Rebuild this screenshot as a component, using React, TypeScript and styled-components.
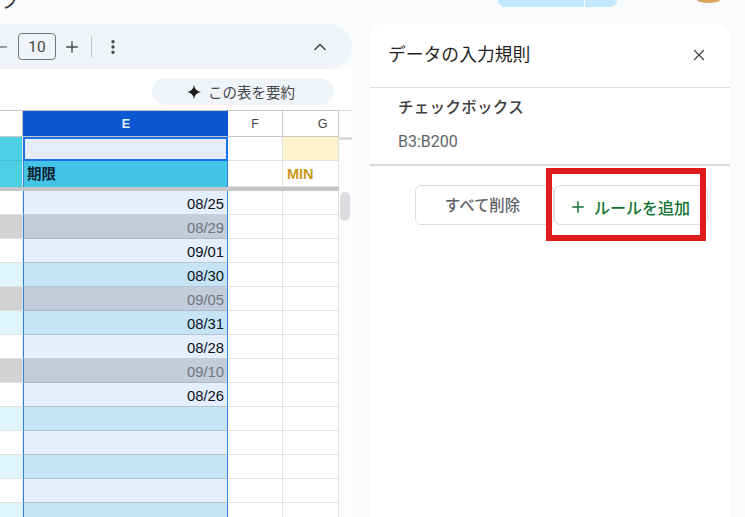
import React from "react";
import styled, { createGlobalStyle } from "styled-components";
import { ChevronUp, EllipsisVertical, Minus, Plus, X } from "lucide-react";

const FONT = `Roboto, "Noto Sans CJK JP", sans-serif`;
const ARIAL = `"Liberation Sans", "Noto Sans CJK JP", sans-serif`;

const GlobalStyle = createGlobalStyle`
  html, body {
    margin: 0;
    padding: 0;
    background: #f9fbfd;
    overflow: hidden;
  }
  * { box-sizing: border-box; }
`;

const Page = styled.div`
  position: relative;
  width: 745px;
  height: 517px;
  overflow: hidden;
  display: grid;
  grid-template-columns: 352px 360px;
  column-gap: 18px;
  grid-template-rows: 24px 1fr;
  font-family: ${FONT};
  background: #f9fbfd;
`;

const TopLeft = styled.div`
  overflow: hidden;
  height: 24px;
`;

const MenuGlyph = styled.div`
  margin-top: -11px;
  font-size: 20px;
  line-height: 24px;
  color: #3c4043;
`;

const TopRight = styled.div`
  display: flex;
  align-items: flex-start;
  padding-left: 128px;
`;

const SharePill = styled.div`
  width: 119px;
  height: 7px;
  background: #c2e7ff;
  border-radius: 0 0 16px 16px;
  display: flex;
  justify-content: flex-end;
`;

const ShareSplit = styled.div`
  width: 33px;
  height: 100%;
  border-left: 1px solid #f9fbfd;
`;

const Avatar = styled.div`
  width: 23px;
  height: 3px;
  margin-left: 80px;
  background: #d9a760;
  border-radius: 0 0 50% 50% / 0 0 100% 100%;
`;

const SheetColumn = styled.div`
  display: flex;
  flex-direction: column;
  min-height: 0;
`;

const Toolbar = styled.div`
  height: 45px;
  flex-shrink: 0;
  background: #f0f4f9;
  border-radius: 0 23px 23px 0;
  display: flex;
  align-items: center;
  color: #444746;
`;

const MinusClip = styled.div`
  width: 7px;
  overflow: hidden;
  display: flex;
  justify-content: flex-end;
  margin-right: 11px;

  svg {
    flex-shrink: 0;
    margin-right: -3px;
  }
`;

const SizeBox = styled.div`
  width: 38px;
  height: 27px;
  border: 1px solid #747775;
  border-radius: 4px;
  font-size: 15.5px;
  display: flex;
  align-items: center;
  justify-content: center;
`;

const ToolIcon = styled.div<{ $left: number }>`
  display: flex;
  margin-left: ${(p) => p.$left}px;
`;

const ToolDivider = styled.div`
  width: 1px;
  height: 22px;
  background: #c7c7c7;
  margin-left: 10px;
`;

const Sheet = styled.div`
  flex: 1;
  background: #fff;
  display: flex;
  flex-direction: column;
  min-height: 0;
`;

const ChipRow = styled.div`
  height: 41px;
  flex-shrink: 0;
  padding: 9px 18px 0 152px;
`;

const SummaryChip = styled.div`
  height: 27px;
  background: #f0f4f9;
  border-radius: 14px;
  display: flex;
  align-items: center;
  gap: 7px;
  font-size: 14.5px;
  color: #444746;
  padding-left: 35px;
`;

const GridWrap = styled.div`
  position: relative;
  flex: 1;
  overflow: hidden;
`;

const GridRow = styled.div<{ $height: number }>`
  display: grid;
  grid-template-columns: 23px 205px 55px 56px 13px;
  height: ${(p) => p.$height}px;
`;

const HeadCell = styled.div<{ $active?: boolean; $shift?: number }>`
  display: flex;
  align-items: center;
  justify-content: center;
  padding-left: ${(p) => p.$shift ?? 0}px;
  font-family: ${ARIAL};
  font-size: 12.5px;
  font-weight: ${(p) => (p.$active ? 700 : 400)};
  color: ${(p) => (p.$active ? "#e3f2fd" : "#444746")};
  background: ${(p) => (p.$active ? "#0b57d0" : "#fff")};
  border-top: 1px solid #c4c7c5;
  border-bottom: 1px solid #c4c7c5;
  border-right: 1px solid ${(p) => (p.$active ? "#0b57d0" : "#c4c7c5")};
`;

const Cell = styled.div<{ $bg?: string; $line?: string }>`
  background: ${(p) => p.$bg ?? "#fff"};
  border-right: 1px solid #e1e1e1;
  border-bottom: 1px solid ${(p) => p.$line ?? "#e1e1e1"};
  overflow: hidden;
`;

const SelectedCell = styled.div<{ $bg: string; $line: string; $muted?: boolean }>`
  background: ${(p) => p.$bg};
  border-left: 1px solid #2f86d8;
  border-right: 1px solid #2f86d8;
  border-bottom: 1px solid ${(p) => p.$line};
  font-family: ${ARIAL};
  font-size: 14.8px;
  line-height: 27px;
  text-align: right;
  padding-right: 3px;
  overflow: hidden;
  color: ${(p) => (p.$muted ? "#70757f" : "#0b1220")};
`;

const ActiveCell = styled.div`
  background: #e5edfc;
  border: 2px solid #1a73e8;
`;

const TitleCell = styled.div`
  background: #44c4e6;
  border-left: 1px solid #2f86d8;
  border-right: 1px solid #2f86d8;
  font-family: ${ARIAL};
  font-size: 14.5px;
  font-weight: 700;
  color: #0c2330;
  padding-left: 3px;
  line-height: 26px;
`;

const MinCell = styled(Cell)`
  font-family: ${ARIAL};
  font-size: 14.5px;
  font-weight: 700;
  color: #c79a1a;
  padding-left: 4px;
  line-height: 27px;
`;

const FreezeBar = styled.div`
  height: 6px;
  width: 339px;
  background: #c6c6c6;
`;

const ScrollGutter = styled.div<{ $ruleTop?: number }>`
  background: #fdfdfe;
  border-top: ${(p) => p.$ruleTop ?? 0}px solid #dadce0;
`;

const ScrollThumb = styled.div`
  position: absolute;
  left: 340px;
  top: 82px;
  width: 10px;
  height: 29px;
  border-radius: 5px;
  background: #dadce0;
`;

const Panel = styled.div`
  background: #fff;
  border-radius: 14px 14px 0 0;
  display: flex;
  flex-direction: column;
  height: 493px;
`;

const PanelHead = styled.div`
  height: 64px;
  display: flex;
  align-items: center;
  justify-content: space-between;
  padding: 0 22px 2px 18px;
  border-bottom: 1px solid #dadce0;
  font-size: 17.8px;
  color: #1f1f1f;
`;

const PanelTitle = styled.div`
  padding-bottom: 4px;
`;

const RuleItem = styled.div`
  height: 78px;
  padding: 10px 28px 0;
  border-bottom: 2px solid #dadada;
`;

const RuleTitle = styled.div`
  font-size: 15.5px;
  font-weight: 500;
  line-height: 20px;
  color: #3c3c3c;
  letter-spacing: 0.3px;
`;

const RuleRange = styled.div`
  margin-top: 14px;
  font-size: 16px;
  line-height: 20px;
  color: #5f6368;
`;

const PanelActions = styled.div`
  display: flex;
  padding: 19px 0 0 45px;
`;

const ActionButton = styled.div<{ $width: number; $green?: boolean }>`
  width: ${(p) => p.$width}px;
  height: 40px;
  display: flex;
  align-items: center;
  justify-content: center;
  gap: 7px;
  padding: ${(p) => (p.$green ? "3px 3px 0 0" : "0 4px 3px 0")};
  border: 1px solid #dadce0;
  border-radius: 6px;
  background: #fff;
  font-size: ${(p) => (p.$green ? 16 : 15.4)}px;
  font-weight: 500;
  color: ${(p) => (p.$green ? "#137333" : "#5f6368")};
`;

const Highlight = styled.div`
  position: absolute;
  left: 546px;
  top: 168px;
  width: 160px;
  height: 73px;
  border: 6px solid #e01b1b;
  pointer-events: none;
`;

const dates = [
  { d: "08/25", bg: "#e5eefd", line: "#c6cfdc" },
  { d: "08/29", bg: "#c3ccda", line: "#aeb7c5", muted: true },
  { d: "09/01", bg: "#e5eefd", line: "#b6c4d4" },
  { d: "08/30", bg: "#c5e5f7", line: "#b8c6d2" },
  { d: "09/05", bg: "#c3ccda", line: "#aeb7c5", muted: true },
  { d: "08/31", bg: "#c5e5f7", line: "#b6c4d4" },
  { d: "08/28", bg: "#e5eefd", line: "#c6cfdc" },
  { d: "09/10", bg: "#c3ccda", line: "#aeb7c5", muted: true },
  { d: "08/26", bg: "#e5eefd", line: "#b6c4d4" },
  { d: "", bg: "#c5e5f7", line: "#b6c4d4" },
  { d: "", bg: "#e5eefd", line: "#b6c4d4" },
  { d: "", bg: "#c5e5f7", line: "#b6c4d4" },
  { d: "", bg: "#e5eefd", line: "#b6c4d4" },
  { d: "", bg: "#c5e5f7", line: "#b6c4d4" },
];

const leftColour = (bg: string) => {
  if (bg === "#c3ccda") return "#d2d2d2";
  if (bg === "#c5e5f7") return "#def6fb";
  return "#fff";
};

function Spark() {
  return (
    <svg width="14" height="14" viewBox="0 0 14 14">
      <path d="M7 0C7.6 4 10 6.4 14 7 10 7.6 7.6 10 7 14 6.4 10 4 7.6 0 7 4 6.4 6.4 4 7 0Z" fill="#1f1f1f" />
    </svg>
  );
}

export default function App() {
  return (
    <Page>
      <GlobalStyle />
      <TopLeft>
        <MenuGlyph>ブ</MenuGlyph>
      </TopLeft>
      <TopRight>
        <SharePill>
          <ShareSplit />
        </SharePill>
        <Avatar />
      </TopRight>

      <SheetColumn>
        <Toolbar>
          <MinusClip>
            <Minus size={16} strokeWidth={1.8} />
          </MinusClip>
          <SizeBox>10</SizeBox>
          <ToolIcon $left={7}>
            <Plus size={18} strokeWidth={1.8} />
          </ToolIcon>
          <ToolDivider />
          <ToolIcon $left={12}>
            <EllipsisVertical size={18} strokeWidth={2.4} />
          </ToolIcon>
          <ToolIcon $left={188}>
            <ChevronUp size={20} strokeWidth={1.8} />
          </ToolIcon>
        </Toolbar>
        <Sheet>
          <ChipRow>
            <SummaryChip>
              <Spark />
              この表を要約
            </SummaryChip>
          </ChipRow>
          <GridWrap>
            <GridRow $height={27}>
              <HeadCell />
              <HeadCell $active $shift={2}>E</HeadCell>
              <HeadCell>F</HeadCell>
              <HeadCell $shift={24}>G</HeadCell>
              <ScrollGutter $ruleTop={1} />
            </GridRow>
            <GridRow $height={24}>
              <Cell $bg="#4dcfe5" $line="#45bfd6" />
              <ActiveCell />
              <Cell />
              <Cell $bg="#fff2cc" />
              <ScrollGutter $ruleTop={3} />
            </GridRow>
            <GridRow $height={24}>
              <Cell $bg="#4dcfe5" $line="#4dcfe5" />
              <TitleCell>期限</TitleCell>
              <Cell />
              <MinCell>MIN</MinCell>
              <ScrollGutter />
            </GridRow>
            <FreezeBar />
            {dates.map((row, i) => (
              <GridRow key={i} $height={24}>
                <Cell $bg={leftColour(row.bg)} />
                <SelectedCell $bg={row.bg} $line={row.line} $muted={row.muted}>
                  {row.d}
                </SelectedCell>
                <Cell />
                <Cell />
                <ScrollGutter />
              </GridRow>
            ))}
            <ScrollThumb />
          </GridWrap>
        </Sheet>
      </SheetColumn>

      <Panel>
        <PanelHead>
          <PanelTitle>データの入力規則</PanelTitle>
          <X size={18} strokeWidth={1.7} color="#444746" />
        </PanelHead>
        <RuleItem>
          <RuleTitle>チェックボックス</RuleTitle>
          <RuleRange>B3:B200</RuleRange>
        </RuleItem>
        <PanelActions>
          <ActionButton $width={139}>すべて削除</ActionButton>
          <ActionButton $width={154} $green>
            <Plus size={18} strokeWidth={2} />
            ルールを追加
          </ActionButton>
        </PanelActions>
      </Panel>
      <Highlight />
    </Page>
  );
}
